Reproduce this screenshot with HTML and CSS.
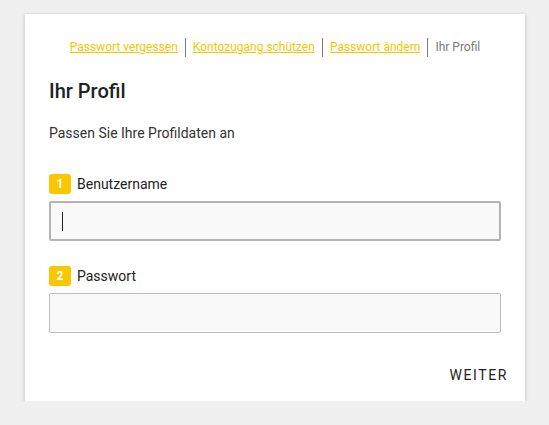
FILE: index.html
```html
<!DOCTYPE html>
<html lang="de">
<head>
<meta charset="utf-8">
<title>Ihr Profil</title>
<link rel="stylesheet" href="styles.css">
</head>
<body>
<div class="card">
  <nav class="crumbs">
    <a class="crumb link" href="#">Passwort vergessen</a>
    <a class="crumb link" href="#">Kontozugang schützen</a>
    <a class="crumb link" href="#">Passwort ändern</a>
    <span class="crumb current">Ihr Profil</span>
  </nav>
  <h1 class="title">Ihr Profil</h1>
  <p class="intro">Passen Sie Ihre Profildaten an</p>
  <div class="field">
    <div class="label"><span class="badge">1</span><span>Benutzername</span></div>
    <div class="input focused"><span class="caret"></span></div>
  </div>
  <div class="field second">
    <div class="label"><span class="badge">2</span><span>Passwort</span></div>
    <div class="input"></div>
  </div>
  <div class="actions">
    <button class="btn">WEITER</button>
  </div>
</div>
</body>
</html>
```
FILE: styles.css
```css
html, body {
  margin: 0;
  padding: 0;
}
body {
  background: #f0f0f0;
  font-family: Roboto, "Liberation Sans", sans-serif;
  color: #212121;
  padding: 14px 24px 0 25px;
}
.card {
  width: 500px;
  height: 387px;
  box-sizing: border-box;
  background: #fff;
  box-shadow: 0 1px 4px rgba(0, 0, 0, 0.22);
  padding: 24px 9px 8px 24px;
  display: flex;
  flex-direction: column;
}
.crumbs {
  display: flex;
  justify-content: center;
  margin-right: 15px;
  height: 19px;
  font-size: 12px;
  line-height: 19px;
}
.crumb {
  padding: 0 7px;
  border-left: 1px solid #7a7a7a;
}
.crumb:first-child {
  border-left: none;
}
.link {
  color: #f8c600;
  text-decoration: underline;
  text-decoration-color: #f8c600;
  text-underline-offset: 1px;
}
.current {
  color: #7a7a7a;
}
.title {
  margin: 20px 0 0;
  font-size: 20px;
  line-height: 28px;
  font-weight: 500;
  color: #212121;
}
.intro {
  margin: 18px 0 0;
  font-size: 14px;
  line-height: 20px;
  color: #333;
}
.field {
  margin-top: 31px;
  margin-right: 15px;
}
.field.second {
  margin-top: 25px;
}
.label {
  display: flex;
  align-items: center;
  gap: 6px;
  font-size: 14px;
  line-height: 20px;
  color: #222;
}
.badge {
  width: 22px;
  height: 20px;
  border-radius: 3px;
  background: #f8c700;
  color: #fff;
  font-size: 12px;
  font-weight: 700;
  display: flex;
  align-items: center;
  justify-content: center;
}
.input {
  margin-top: 7px;
  height: 40px;
  box-sizing: border-box;
  border: 1px solid #bdbdbd;
  border-radius: 2px;
  background: #f9f9f9;
  display: flex;
  align-items: center;
  padding-left: 12px;
}
.input.focused {
  border: 2px solid #b3b3b3;
  padding-left: 11px;
}
.caret {
  width: 1px;
  height: 19px;
  background: #222;
}
.actions {
  margin-top: auto;
  display: flex;
  justify-content: flex-end;
}
.btn {
  height: 36px;
  border: none;
  background: none;
  padding: 0 8px;
  font-family: Roboto, "Liberation Sans", sans-serif;
  font-size: 14px;
  font-weight: 400;
  letter-spacing: 1.6px;
  color: #212121;
  line-height: 36px;
}
```
